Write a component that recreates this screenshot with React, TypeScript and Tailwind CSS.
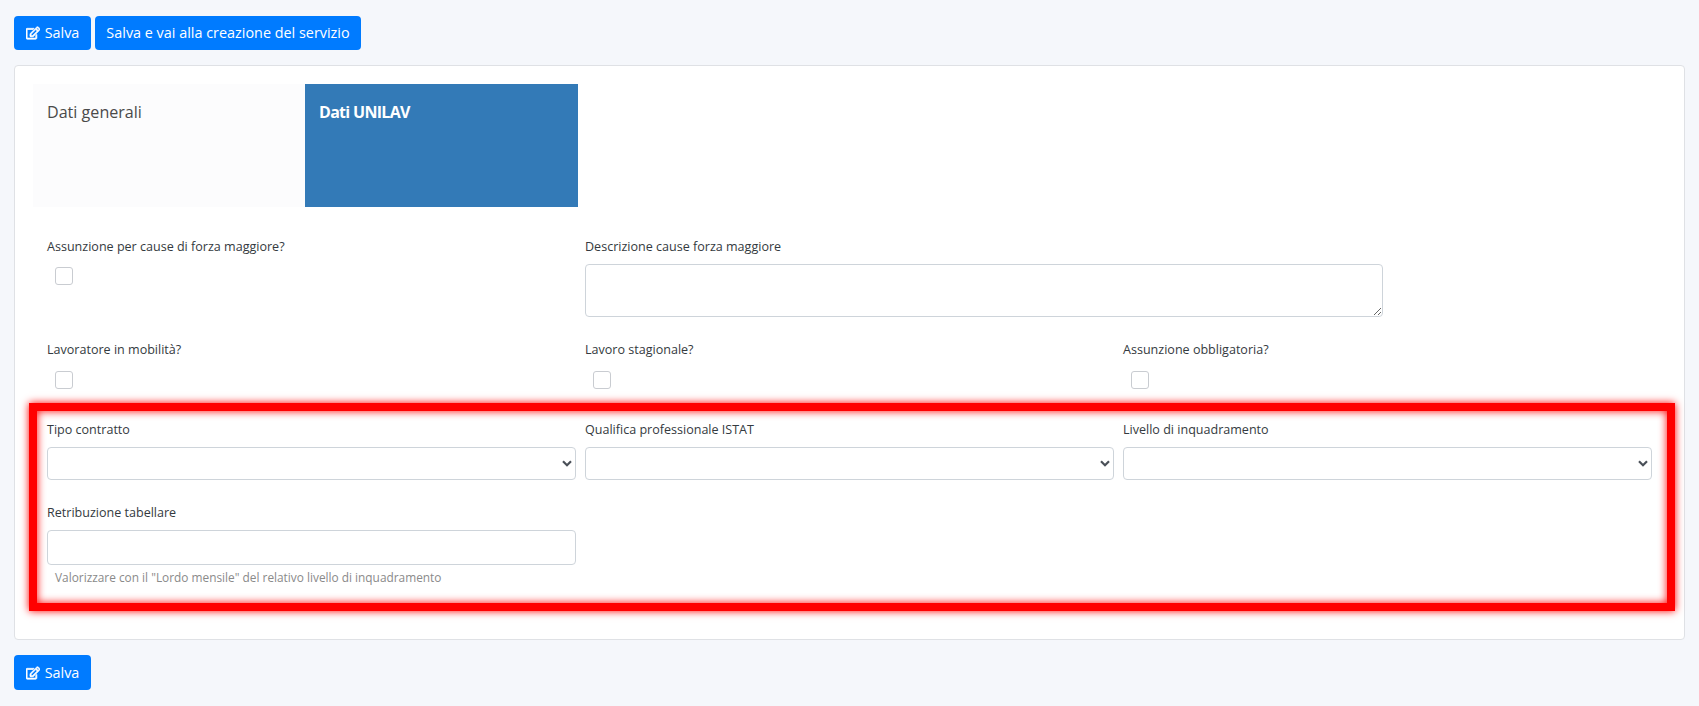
import React from 'react';
import { FaRegEdit } from 'react-icons/fa';

const SaveButton: React.FC<{ className: string }> = ({ className }) => (
  <button
    className={`${className} w-[77px] flex items-center justify-center gap-[5px] rounded-[4px] bg-[#007bff] text-[14.4px] text-white`}
  >
    <FaRegEdit className="h-[14px] w-[14px]" stroke="currentColor" strokeWidth={28} />
    Salva
  </button>
);

const Label: React.FC<{ children: React.ReactNode }> = ({ children }) => (
  <label className="block h-[18px] text-[12.55px] leading-[18px] text-[#343a40]">{children}</label>
);

const Check: React.FC = () => (
  <input
    type="checkbox"
    className="block ml-2 h-[18px] w-[18px] appearance-none rounded-[3px] border border-[#c9ccd1] bg-white"
  />
);

const Select: React.FC = () => (
  <div className="relative mt-2">
    <select className="block h-[33px] w-full appearance-none rounded-[4px] border border-[#ced4da] bg-white text-[14px]">
      <option></option>
    </select>
    <svg
      viewBox="0 0 10 7"
      className="pointer-events-none absolute top-[13px] right-[4px] h-[7px] w-[10px] text-[#4a5058]"
      fill="none"
      stroke="currentColor"
      strokeWidth="2.2"
    >
      <path d="M1 1.2l4 4 4-4" />
    </svg>
  </div>
);

export default function App() {
  return (
    <div className="min-h-[706px] bg-[#f5f7fb] px-[14px] pt-4 pb-4 font-['Open_Sans','Noto_Sans',sans-serif]">
      {/* Top actions */}
      <div className="flex gap-1">
        <SaveButton className="h-[34px]" />
        <button className="h-[34px] w-[266px] rounded-[4px] bg-[#007bff] text-[14.4px] text-white">
          Salva e vai alla creazione del servizio
        </button>
      </div>

      {/* Main card */}
      <div className="mt-[15px] w-[1671px] rounded-[4px] border border-[#dfe1e5] bg-white px-[18px] pt-[18px] pb-[28px]">
        {/* Tabs */}
        <div className="flex h-[123px]">
          <div className="w-[272px] bg-[#fcfcfd] px-[14px] pt-[17px] text-[16.1px] leading-[22px] text-[#4a4a4a]">
            Dati generali
          </div>
          <div className="w-[273px] bg-[#337ab7] px-[14px] pt-[17px] text-[16px] font-bold leading-[22px] tracking-[-0.7px] text-white">
            Dati UNILAV
          </div>
        </div>

        {/* Force majeure row */}
        <div className="mt-[31px] grid grid-cols-[529px_798px] gap-x-[9px] pl-[14px]">
          <div>
            <Label>Assunzione per cause di forza maggiore?</Label>
            <div className="mt-[11px]">
              <Check />
            </div>
          </div>
          <div>
            <Label>Descrizione cause forza maggiore</Label>
            <textarea className="mt-2 block h-[53px] w-full rounded-[4px] border border-[#ced4da] bg-white" />
          </div>
        </div>

        {/* Flags row */}
        <div className="mt-6 grid grid-cols-[529px_529px_529px] gap-x-[9px] pl-[14px]">
          <div>
            <Label>Lavoratore in mobilità?</Label>
            <div className="mt-3">
              <Check />
            </div>
          </div>
          <div>
            <Label>Lavoro stagionale?</Label>
            <div className="mt-3">
              <Check />
            </div>
          </div>
          <div>
            <Label>Assunzione obbligatoria?</Label>
            <div className="mt-3">
              <Check />
            </div>
          </div>
        </div>

        {/* Highlighted section */}
        <div className="-ml-1 -mr-[9px] mt-[14px] border-8 border-[#ff0000] pt-[10px] pr-[15px] pb-[18px] pl-[10px] shadow-[0_0_8px_#ff0000,inset_0_0_8px_#ff0000]">
          <div className="grid grid-cols-[529px_529px_529px] gap-x-[9px]">
            <div>
              <Label>Tipo contratto</Label>
              <Select />
            </div>
            <div>
              <Label>Qualifica professionale ISTAT</Label>
              <Select />
            </div>
            <div>
              <Label>Livello di inquadramento</Label>
              <Select />
            </div>
          </div>
          <div className="mt-6 w-[529px]">
            <Label>Retribuzione tabellare</Label>
            <input
              type="text"
              className="mt-2 block h-[35px] w-full rounded-[4px] border border-[#ced4da] bg-white"
            />
            <p className="mt-1 pl-2 text-[11.87px] leading-4 text-[#8a8a8a]">
              Valorizzare con il "Lordo mensile" del relativo livello di inquadramento
            </p>
          </div>
        </div>
      </div>

      {/* Bottom actions */}
      <div className="mt-[15px]">
        <SaveButton className="h-[35px]" />
      </div>
    </div>
  );
}
